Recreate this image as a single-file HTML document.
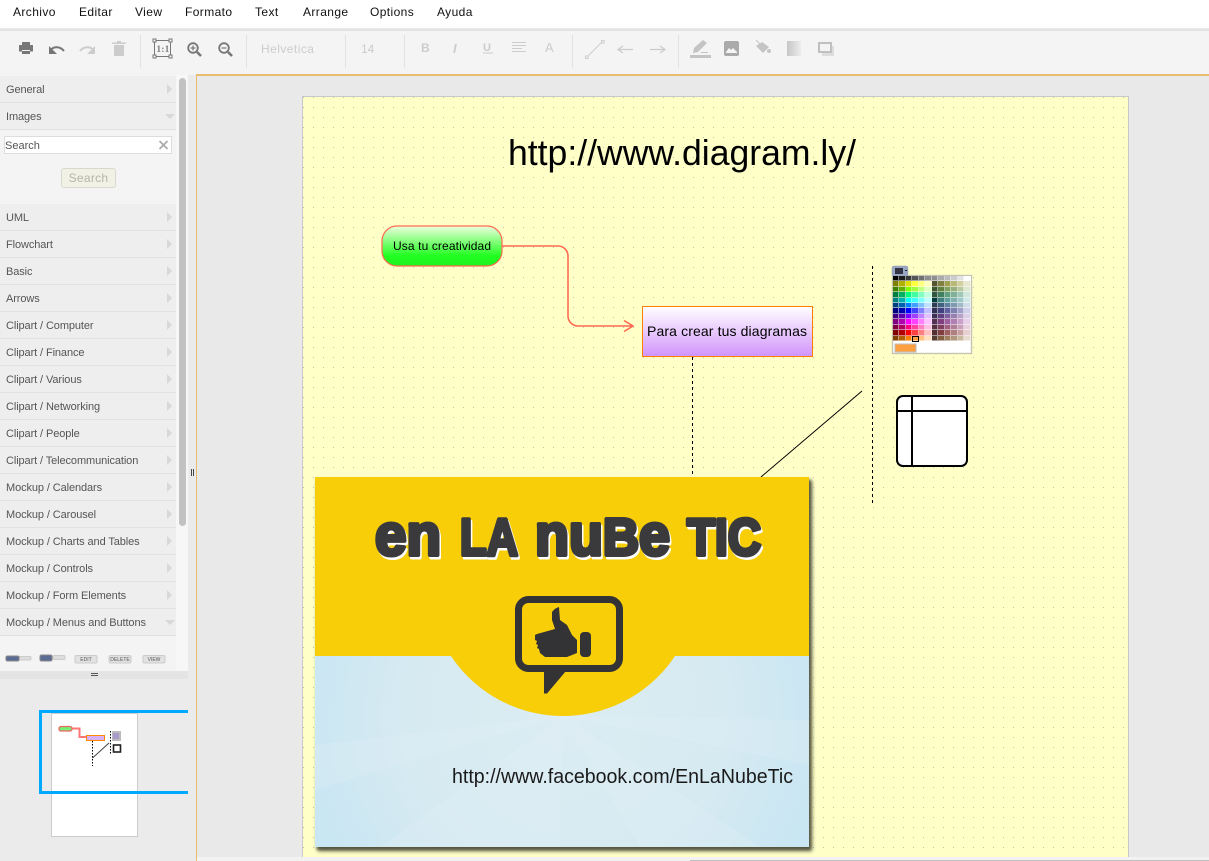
<!DOCTYPE html>
<html lang="es"><head><meta charset="utf-8"><title>Diagram</title>
<style>
html,body{margin:0;padding:0;width:1209px;height:861px;overflow:hidden;background:#e9e9e9;font-family:"Liberation Sans",Arial,sans-serif}
.a{position:absolute}
#menu span{position:absolute;top:5px;font-size:12px;letter-spacing:.4px;color:#111;line-height:14px}
.sep{position:absolute;top:35px;width:1px;height:33px;background:#e2e2e2}
.row{position:absolute;left:0;width:176px;height:26px;background:#eee;border-bottom:1px solid #e2e2e2;font-size:11px;letter-spacing:-.1px;color:#555;line-height:28px;text-indent:6px}
.row:after{content:"";position:absolute;left:167px;top:8px;border-left:5px solid #d8d8d8;border-top:5px solid transparent;border-bottom:5px solid transparent}
.row.o:after{left:165px;top:11px;border-top:5px solid #d8d8d8;border-left:5px solid transparent;border-right:5px solid transparent;border-bottom:0}
#pal{position:absolute;left:893px;top:276px;width:78px;height:65px;display:grid;grid-template-columns:6px 7px 6px 7px 6px 7px 6px 7px 6px 7px 6px 7px;grid-template-rows:5px 6px 5px 6px 5px 5px 6px 5px 6px 5px 6px 5px;background:#fff}
#pal i{display:block;box-sizing:border-box;border-right:1px solid rgba(255,255,255,.5);border-bottom:1px solid rgba(255,255,255,.5)}
</style></head><body>

<div class="a" style="left:0;top:0;width:1209px;height:28px;background:#fff"></div>
<div class="a" style="left:0;top:29px;width:1209px;height:2px;background:#e3e3e3"></div>
<div id="menu">
<span style="left:13px">Archivo</span><span style="left:79px">Editar</span><span style="left:135px">View</span><span style="left:185px">Formato</span><span style="left:255px">Text</span><span style="left:303px">Arrange</span><span style="left:370px">Options</span><span style="left:437px">Ayuda</span>
</div>

<!-- toolbar -->
<div class="a" style="left:0;top:31px;width:1209px;height:44px;background:#f4f4f4"></div>
<div class="sep" style="left:140px"></div><div class="sep" style="left:246px"></div><div class="sep" style="left:345px"></div><div class="sep" style="left:404px"></div><div class="sep" style="left:572px"></div><div class="sep" style="left:678px"></div>
<div class="a" style="left:261px;top:42px;font-size:12px;letter-spacing:.45px;color:#ccc">Helvetica</div>
<div class="a" style="left:361px;top:42px;font-size:12px;color:#ccc">14</div>
<svg class="a" style="left:0;top:30px" width="860" height="40" viewBox="0 30 860 40">
<!-- print -->
<path fill="#777" d="M22 42h8v3h2.500a.5.500 0 0 1 .5.500V51.500h-3V50H22v1.500h-3V45.500a.5.500 0 0 1 .5-.5H22z"/><rect x="22" y="51" width="8" height="3" fill="#777"/>
<!-- undo -->
<path fill="none" stroke="#777" stroke-width="2" d="M51 49.500c3-3 9-3.500 13 1.500"/><path fill="#777" d="M49 46v8h8z"/>
<!-- redo -->
<path fill="none" stroke="#ccc" stroke-width="2" d="M93 49.500c-3-3-9-3.500-13 1.500"/><path fill="#ccc" d="M95 46v8h-8z"/>
<!-- trash -->
<path fill="#ccc" d="M112 42.500h5v-1.500h4v1.500h5v1.500h-14zM114 45h10v11h-10z"/>
<!-- 1:1 -->
<rect x="154.500" y="40.500" width="16" height="16" fill="none" stroke="#777"/>
<g fill="#f4f4f4" stroke="#777"><rect x="153" y="39" width="3" height="3"/><rect x="169" y="39" width="3" height="3"/><rect x="153" y="55" width="3" height="3"/><rect x="169" y="55" width="3" height="3"/></g>
<text x="156.500" y="52" font-family="Liberation Serif" font-size="9" font-weight="bold" fill="#777" letter-spacing=".4">1:1</text>
<!-- zoom in/out -->
<g fill="none" stroke="#777"><circle cx="193" cy="48" r="4.800" stroke-width="1.800"/><path d="M197 52l4 4" stroke-width="2.600"/><path d="M190.500 48h5M193 45.500v5" stroke-width="1.200"/>
<circle cx="224" cy="48" r="4.800" stroke-width="1.800"/><path d="M228 52l4 4" stroke-width="2.600"/><path d="M221.500 48h5" stroke-width="1.200"/></g>
<!-- B I U align A -->
<text x="421" y="52" font-size="12" font-weight="bold" fill="#ccc">B</text>
<text x="453" y="53" font-size="13" font-weight="bold" font-style="italic" fill="#ccc">I</text>
<text x="483" y="51" font-size="11" font-weight="bold" fill="#ccc">U</text><rect x="483" y="52.500" width="10" height="1" fill="#ccc"/>
<path stroke="#ccc" d="M512 42.500h14M512 45.500h14M512 48.500h10M512 51.500h14" fill="none"/>
<text x="545" y="52" font-size="13" fill="#ccc">A</text>
<!-- line, arrows -->
<path d="M587 57l15-15" stroke="#ccc" fill="none"/><rect x="585.500" y="56" width="2.500" height="2.500" fill="#f4f4f4" stroke="#ccc"/><rect x="601.500" y="40.500" width="2.500" height="2.500" fill="#f4f4f4" stroke="#ccc"/>
<path d="M618 49.500h15M623 46l-5 3.500 5 3.500" stroke="#ccc" stroke-width="1.300" fill="none"/>
<path d="M665 49.500h-15M660 46l5 3.500-5 3.500" stroke="#ccc" stroke-width="1.300" fill="none"/>
<!-- pen -->
<path fill="#c4c4c4" d="M693 53l1-5 9-8 4 3-9 9zM701 52h7v1h-7z"/><rect x="690" y="55" width="21" height="3" fill="#c4c4c4"/>
<!-- image -->
<rect x="724" y="41" width="15" height="15" rx="2" fill="#aaa"/><path fill="#f4f4f4" d="M726 52l3-4 2 2 2-2 4 4v1h-11z"/>
<!-- fill -->
<path fill="#c4c4c4" d="M756 46l6-4 7 5-6 6z"/><path d="M756 40l5 5" stroke="#c4c4c4" fill="none"/><circle cx="769" cy="51" r="2" fill="#c4c4c4"/>
<!-- gradient -->
<defs><linearGradient id="gr" x1="0" x2="1"><stop offset="0" stop-color="#c6c6c6"/><stop offset="1" stop-color="#ececec"/></linearGradient>
<linearGradient id="g1" x1="0" x2="0" y1="0" y2="1"><stop offset="0" stop-color="#eeffdd"/><stop offset=".75" stop-color="#20ff20"/><stop offset="1" stop-color="#20f020"/></linearGradient>
<linearGradient id="g2" x1="0" x2="0" y1="0" y2="1"><stop offset="0" stop-color="#fff"/><stop offset="1" stop-color="#d194fb"/></linearGradient>
<pattern id="dots" x="3" y="7" width="10" height="10" patternUnits="userSpaceOnUse"><rect width="1" height="1" fill="#c2c2ae"/></pattern></defs>
<rect x="787" y="41" width="14" height="15" fill="url(#gr)"/>
<!-- shadow -->
<rect x="822" y="46" width="12" height="10" fill="#dcdcdc"/><rect x="819" y="43" width="12" height="9" fill="#f4f4f4" stroke="#c0c0c0" stroke-width="2"/>
</svg>

<!-- sidebar -->
<div class="a" style="left:0;top:75px;width:188px;height:596px;background:#f4f4f4"></div>
<div class="a" style="left:176px;top:75px;width:12px;height:596px;background:#f7f7f7"></div>
<div class="a" style="left:179px;top:78px;width:7px;height:448px;border-radius:4px;background:#c2c2c2"></div>
<div class="row" style="top:76px">General</div>
<div class="row o" style="top:103px">Images</div>
<div class="a" style="left:4px;top:136px;width:166px;height:16px;background:#fff;border:1px solid #ddd;font-size:11px;line-height:18px;color:#555">Search</div>
<svg class="a" style="left:158px;top:140px" width="11" height="10"><path d="M1.500 1l8 8M9.500 1l-8 8" stroke="#aaa" stroke-width="1.700"/></svg>
<div class="a" style="left:61px;top:168px;width:53px;height:18px;background:#f1f1e6;border:1px solid #d8d8cc;border-radius:3px;font-size:12px;line-height:19px;text-align:center;color:#b5b5a8;letter-spacing:.3px">Search</div>
<div class="row" style="top:204px">UML</div>
<div class="row" style="top:231px">Flowchart</div>
<div class="row" style="top:258px">Basic</div>
<div class="row" style="top:285px">Arrows</div>
<div class="row" style="top:312px">Clipart / Computer</div>
<div class="row" style="top:339px">Clipart / Finance</div>
<div class="row" style="top:366px">Clipart / Various</div>
<div class="row" style="top:393px">Clipart / Networking</div>
<div class="row" style="top:420px">Clipart / People</div>
<div class="row" style="top:447px">Clipart / Telecommunication</div>
<div class="row" style="top:474px">Mockup / Calendars</div>
<div class="row" style="top:501px">Mockup / Carousel</div>
<div class="row" style="top:528px">Mockup / Charts and Tables</div>
<div class="row" style="top:555px">Mockup / Controls</div>
<div class="row" style="top:582px">Mockup / Form Elements</div>
<div class="row o" style="top:609px">Mockup / Menus and Buttons</div>
<svg class="a" style="left:0;top:650px" width="176" height="18">
<g fill="#ddd" stroke="#ccc"><rect x="19" y="6.500" width="12" height="3.500" rx="1"/><rect x="53" y="5.500" width="12" height="4" rx="1"/></g>
<rect x="6" y="6" width="13" height="5" rx="1.500" fill="#5a6c94" stroke="#888"/><rect x="40" y="5" width="12" height="6" rx="1.500" fill="#5a6c94" stroke="#888"/>
<g fill="#e2e2e2" stroke="#ccc"><rect x="75" y="5.500" width="22" height="7.500" rx="1.500"/><rect x="109" y="5.500" width="22" height="7.500" rx="1.500"/><rect x="143" y="5.500" width="22" height="7.500" rx="1.500"/></g>
<g font-size="5" fill="#555" text-anchor="middle"><text x="86" y="11">EDIT</text><text x="120" y="11">DELETE</text><text x="154" y="11">VIEW</text></g>
</svg>
<!-- splitter + outline -->
<div class="a" style="left:0;top:671px;width:188px;height:8px;background:#e4e4e4"></div>
<div class="a" style="left:91px;top:673px;width:7px;height:1px;background:#555"></div><div class="a" style="left:91px;top:675px;width:7px;height:1px;background:#555"></div>
<div class="a" style="left:0;top:679px;width:188px;height:182px;background:#ebebeb"></div>
<div class="a" style="left:188px;top:75px;width:8px;height:786px;background:#ebebeb"></div>
<div class="a" style="left:191px;top:469px;width:1px;height:7px;background:#444"></div><div class="a" style="left:193px;top:469px;width:1px;height:7px;background:#444"></div>
<div class="a" style="left:51px;top:713px;width:85px;height:122px;background:#fff;border:1px solid #ccc"></div>
<svg class="a" style="left:39px;top:710px" width="149" height="90">
<path d="M33 18.500h7.500v8.500h7" fill="none" stroke="#f77" stroke-width="2"/>
<rect x="20" y="16.500" width="13" height="4.500" rx="2" fill="#7e7" stroke="#e66" stroke-width="1.300"/>
<rect x="47.500" y="25.500" width="18" height="5" fill="#d8b0f8" stroke="#f80" stroke-width="1"/>
<path d="M53.500 31v25M71.500 21v24" stroke="#000" stroke-dasharray="1.500 1.500" fill="none"/>
<path d="M53.500 48L70 33" stroke="#444" fill="none"/>
<rect x="73" y="21" width="9" height="10" fill="#bbb"/><rect x="74" y="23" width="6" height="6" fill="#a9c"/>
<rect x="74.500" y="35" width="7" height="7" fill="#fff" stroke="#222" stroke-width="1.600"/>
</svg>
<div class="a" style="left:39px;top:710px;width:146px;height:78px;border:3px solid #00a8ff;border-right:0"></div>

<!-- canvas -->
<div class="a" style="left:196px;top:74px;width:1013px;height:2px;background:#e8bd6d"></div>
<div class="a" style="left:196px;top:74px;width:1px;height:787px;background:#e8bd6d"></div>
<div class="a" style="left:197px;top:76px;width:1012px;height:781px;background:#e9e9e9"></div>
<div class="a" style="left:303px;top:97px;width:825px;height:760px;background-color:#ffffc8;box-shadow:0 0 0 1px #c8c8c8"></div>
<svg class="a" style="left:0;top:0" width="1209" height="861"><rect x="303" y="97" width="825" height="760" fill="url(#dots)"/></svg>
<div class="a" style="left:197px;top:857px;width:1012px;height:4px;background:#f2f2f2"></div>
<div class="a" style="left:690px;top:860px;width:519px;height:1px;background:#c0c0c0"></div>

<!-- diagram -->
<svg class="a" style="left:0;top:0" width="1209" height="861" font-family="Liberation Sans">
<text x="508" y="165" font-size="36" textLength="348" lengthAdjust="spacingAndGlyphs" fill="#000">http://www.diagram.ly/</text>
<path d="M502 246h56a10 10 0 0 1 10 10v60a10 10 0 0 0 10 10h54M624 320.500l9 5.500-9 5.500" fill="none" stroke="#ff6a50" stroke-width="1.600"/>
<rect x="382" y="226" width="120" height="40" rx="15" fill="url(#g1)" stroke="#ff6a50" stroke-width="1.200"/>
<text x="442" y="250" font-size="12" text-anchor="middle" textLength="98" fill="#000">Usa tu creatividad</text>
<rect x="642.500" y="306.500" width="170" height="50" fill="url(#g2)" stroke="#ff8000"/>
<text x="647" y="336" font-size="14" textLength="160" fill="#000">Para crear tus diagramas</text>
<path d="M692.500 357v120M872.500 266v237" stroke="#000" stroke-dasharray="3 3" fill="none"/>
<path d="M862 391l-101 86" stroke="#000" fill="none"/>
<rect x="897" y="396" width="70" height="70" rx="6" fill="#fff" stroke="#000" stroke-width="2"/>
<path d="M897 411h70M912 396v70" stroke="#000" stroke-width="2" fill="none"/>
<!-- palette frame -->
<rect x="892.500" y="275.500" width="79" height="78" fill="#fff" stroke="#c4c4b0" stroke-width="1.400"/>
<rect x="892" y="266" width="16" height="10" rx="2" fill="#98a8c4" stroke="#99a" stroke-width=".5"/>
<rect x="895" y="268" width="8" height="6" fill="#334"/>
<path d="M905 270h2v1h-2z" fill="#222"/>
<rect x="895" y="344" width="21" height="8" fill="#ffa040" stroke="#bbb"/>
</svg>
<div id="pal">
<i style="background:#000"></i><i style="background:#1c1c1c"></i><i style="background:#383838"></i><i style="background:#555"></i><i style="background:#717171"></i><i style="background:#8e8e8e"></i><i style="background:#8e8e8e"></i><i style="background:#aaa"></i><i style="background:#bbb"></i><i style="background:#ccc"></i><i style="background:#e3e3e3"></i><i style="background:#fff"></i>
<i style="background:#808000"></i><i style="background:#b0b000"></i><i style="background:#e0e000"></i><i style="background:#ffff40"></i><i style="background:#ffff80"></i><i style="background:#ffffc0"></i><i style="background:#555530"></i><i style="background:#808040"></i><i style="background:#a0a050"></i><i style="background:#b8b878"></i><i style="background:#d0d0a0"></i><i style="background:#e8e8d0"></i>
<i style="background:#408000"></i><i style="background:#60b000"></i><i style="background:#80ff00"></i><i style="background:#a0ff40"></i><i style="background:#c0ff80"></i><i style="background:#e0ffc0"></i><i style="background:#3c5530"></i><i style="background:#608040"></i><i style="background:#80a060"></i><i style="background:#98b080"></i><i style="background:#b8c8a0"></i><i style="background:#dce8d0"></i>
<i style="background:#008040"></i><i style="background:#00b060"></i><i style="background:#00ff80"></i><i style="background:#40ffa0"></i><i style="background:#80ffc0"></i><i style="background:#c0ffe0"></i><i style="background:#305540"></i><i style="background:#408060"></i><i style="background:#60a080"></i><i style="background:#80b098"></i><i style="background:#a0c8b8"></i><i style="background:#d0e8dc"></i>
<i style="background:#008080"></i><i style="background:#00b0b0"></i><i style="background:#00ffff"></i><i style="background:#40ffff"></i><i style="background:#80ffff"></i><i style="background:#c0ffff"></i><i style="background:#003c3c"></i><i style="background:#408080"></i><i style="background:#60a0a0"></i><i style="background:#80b0b0"></i><i style="background:#a0c8c8"></i><i style="background:#d0e8e8"></i>
<i style="background:#004080"></i><i style="background:#0060b0"></i><i style="background:#0080ff"></i><i style="background:#40a0ff"></i><i style="background:#80c0ff"></i><i style="background:#c0e0ff"></i><i style="background:#303c55"></i><i style="background:#406080"></i><i style="background:#6080a0"></i><i style="background:#8098b0"></i><i style="background:#a0b8c8"></i><i style="background:#d0dce8"></i>
<i style="background:#000080"></i><i style="background:#0000b0"></i><i style="background:#0000ff"></i><i style="background:#4040ff"></i><i style="background:#8080ff"></i><i style="background:#c0c0ff"></i><i style="background:#303055"></i><i style="background:#404080"></i><i style="background:#6060a0"></i><i style="background:#8080b0"></i><i style="background:#a0a0c8"></i><i style="background:#d0d0e8"></i>
<i style="background:#400080"></i><i style="background:#6000b0"></i><i style="background:#8000ff"></i><i style="background:#a040ff"></i><i style="background:#c080ff"></i><i style="background:#e0c0ff"></i><i style="background:#3c3055"></i><i style="background:#604080"></i><i style="background:#8060a0"></i><i style="background:#9880b0"></i><i style="background:#b8a0c8"></i><i style="background:#dcd0e8"></i>
<i style="background:#800080"></i><i style="background:#b000b0"></i><i style="background:#ff00ff"></i><i style="background:#ff40ff"></i><i style="background:#ff80ff"></i><i style="background:#ffc0ff"></i><i style="background:#553055"></i><i style="background:#804080"></i><i style="background:#a060a0"></i><i style="background:#b080b0"></i><i style="background:#c8a0c8"></i><i style="background:#e8d0e8"></i>
<i style="background:#800040"></i><i style="background:#b00060"></i><i style="background:#ff0080"></i><i style="background:#ff40a0"></i><i style="background:#ff80c0"></i><i style="background:#ffc0e0"></i><i style="background:#553040"></i><i style="background:#804060"></i><i style="background:#a06080"></i><i style="background:#b08098"></i><i style="background:#c8a0b8"></i><i style="background:#e8d0dc"></i>
<i style="background:#800000"></i><i style="background:#b00000"></i><i style="background:#ff0000"></i><i style="background:#ff4040"></i><i style="background:#ff8080"></i><i style="background:#ffc0c0"></i><i style="background:#553030"></i><i style="background:#804040"></i><i style="background:#a06060"></i><i style="background:#b08080"></i><i style="background:#c8a0a0"></i><i style="background:#e8d0d0"></i>
<i style="background:#804000"></i><i style="background:#b06000"></i><i style="background:#ff8000"></i><i style="background:#ffa040"></i><i style="background:#ffc080"></i><i style="background:#ffe0c0"></i><i style="background:#553c30"></i><i style="background:#806040"></i><i style="background:#a08060"></i><i style="background:#b09880"></i><i style="background:#c8b8a0"></i><i style="background:#e8dcd0"></i>
</div>
<div class="a" style="left:912px;top:336px;width:5px;height:4px;border:1.200px solid #000"></div>

<!-- banner image -->
<div class="a" style="left:315px;top:477px;width:494px;height:370px;box-shadow:2px 3px 3px #55553f,3px 4px 4px #88886a"></div>
<svg class="a" style="left:315px;top:477px" width="494" height="370" viewBox="315 477 494 370" font-family="Liberation Sans">
<defs><radialGradient id="sky" gradientUnits="userSpaceOnUse" cx="563" cy="716" r="270"><stop offset="0" stop-color="#dcedf3"/><stop offset=".6" stop-color="#d6eaf2"/><stop offset="1" stop-color="#c8e6f3"/></radialGradient></defs>
<rect x="315" y="477" width="494" height="179" fill="#f8ce08"/>
<rect x="315" y="656" width="494" height="191" fill="url(#sky)"/>
<g fill="#e2f0f5" opacity=".3">
<path d="M563 716L380 847H560ZM563 716L315 745V790ZM563 716L640 847H760ZM563 716L809 765V720Z"/>
</g>
<circle cx="563" cy="581.500" r="134.500" fill="#f8ce08"/>
<rect x="315" y="477" width="494" height="179" fill="#f8ce08"/>
<!-- headline -->
<g font-weight="bold" fill="#fff" stroke="#fff" stroke-width="4" stroke-linejoin="round" transform="translate(1.500 2.500)">
<text x="375" y="555" textLength="66" lengthAdjust="spacingAndGlyphs" font-size="58">en</text>
<text x="460" y="555" textLength="58" lengthAdjust="spacingAndGlyphs" font-size="52">LA</text>
<text x="535" y="555" textLength="135" lengthAdjust="spacingAndGlyphs" font-size="58">nu<tspan font-size="52">B</tspan>e</text>
<text x="687" y="555" textLength="74" lengthAdjust="spacingAndGlyphs" font-size="52">TIC</text>
</g>
<g font-weight="bold" fill="#3a3a3c" stroke="#3a3a3c" stroke-width="4" stroke-linejoin="round">
<text x="375" y="555" textLength="66" lengthAdjust="spacingAndGlyphs" font-size="58">en</text>
<text x="460" y="555" textLength="58" lengthAdjust="spacingAndGlyphs" font-size="52">LA</text>
<text x="535" y="555" textLength="135" lengthAdjust="spacingAndGlyphs" font-size="58">nu<tspan font-size="52">B</tspan>e</text>
<text x="687" y="555" textLength="74" lengthAdjust="spacingAndGlyphs" font-size="52">TIC</text>
</g>
<!-- thumbs-up bubble -->
<rect x="518.500" y="599.500" width="101" height="69" rx="10" fill="none" stroke="#333335" stroke-width="7"/>
<path d="M544 670v23.500h3L566 671z" fill="#333335"/>
<path fill="#333335" d="M552 612q3-4 7-5l1 13 7 5 5 10 5 5v13l-10 4h-22l-5-4-1-4-2-1 1-3-2-1 1-3-2-1 0-5 2-1 18-5-3-9z"/>
<rect x="580" y="632" width="11" height="25" rx="4" fill="#333335"/>
<text x="452" y="783" font-size="20" textLength="341" lengthAdjust="spacingAndGlyphs" fill="#1a1a1a">http://www.facebook.com/EnLaNubeTic</text>
</svg>
</body></html>
